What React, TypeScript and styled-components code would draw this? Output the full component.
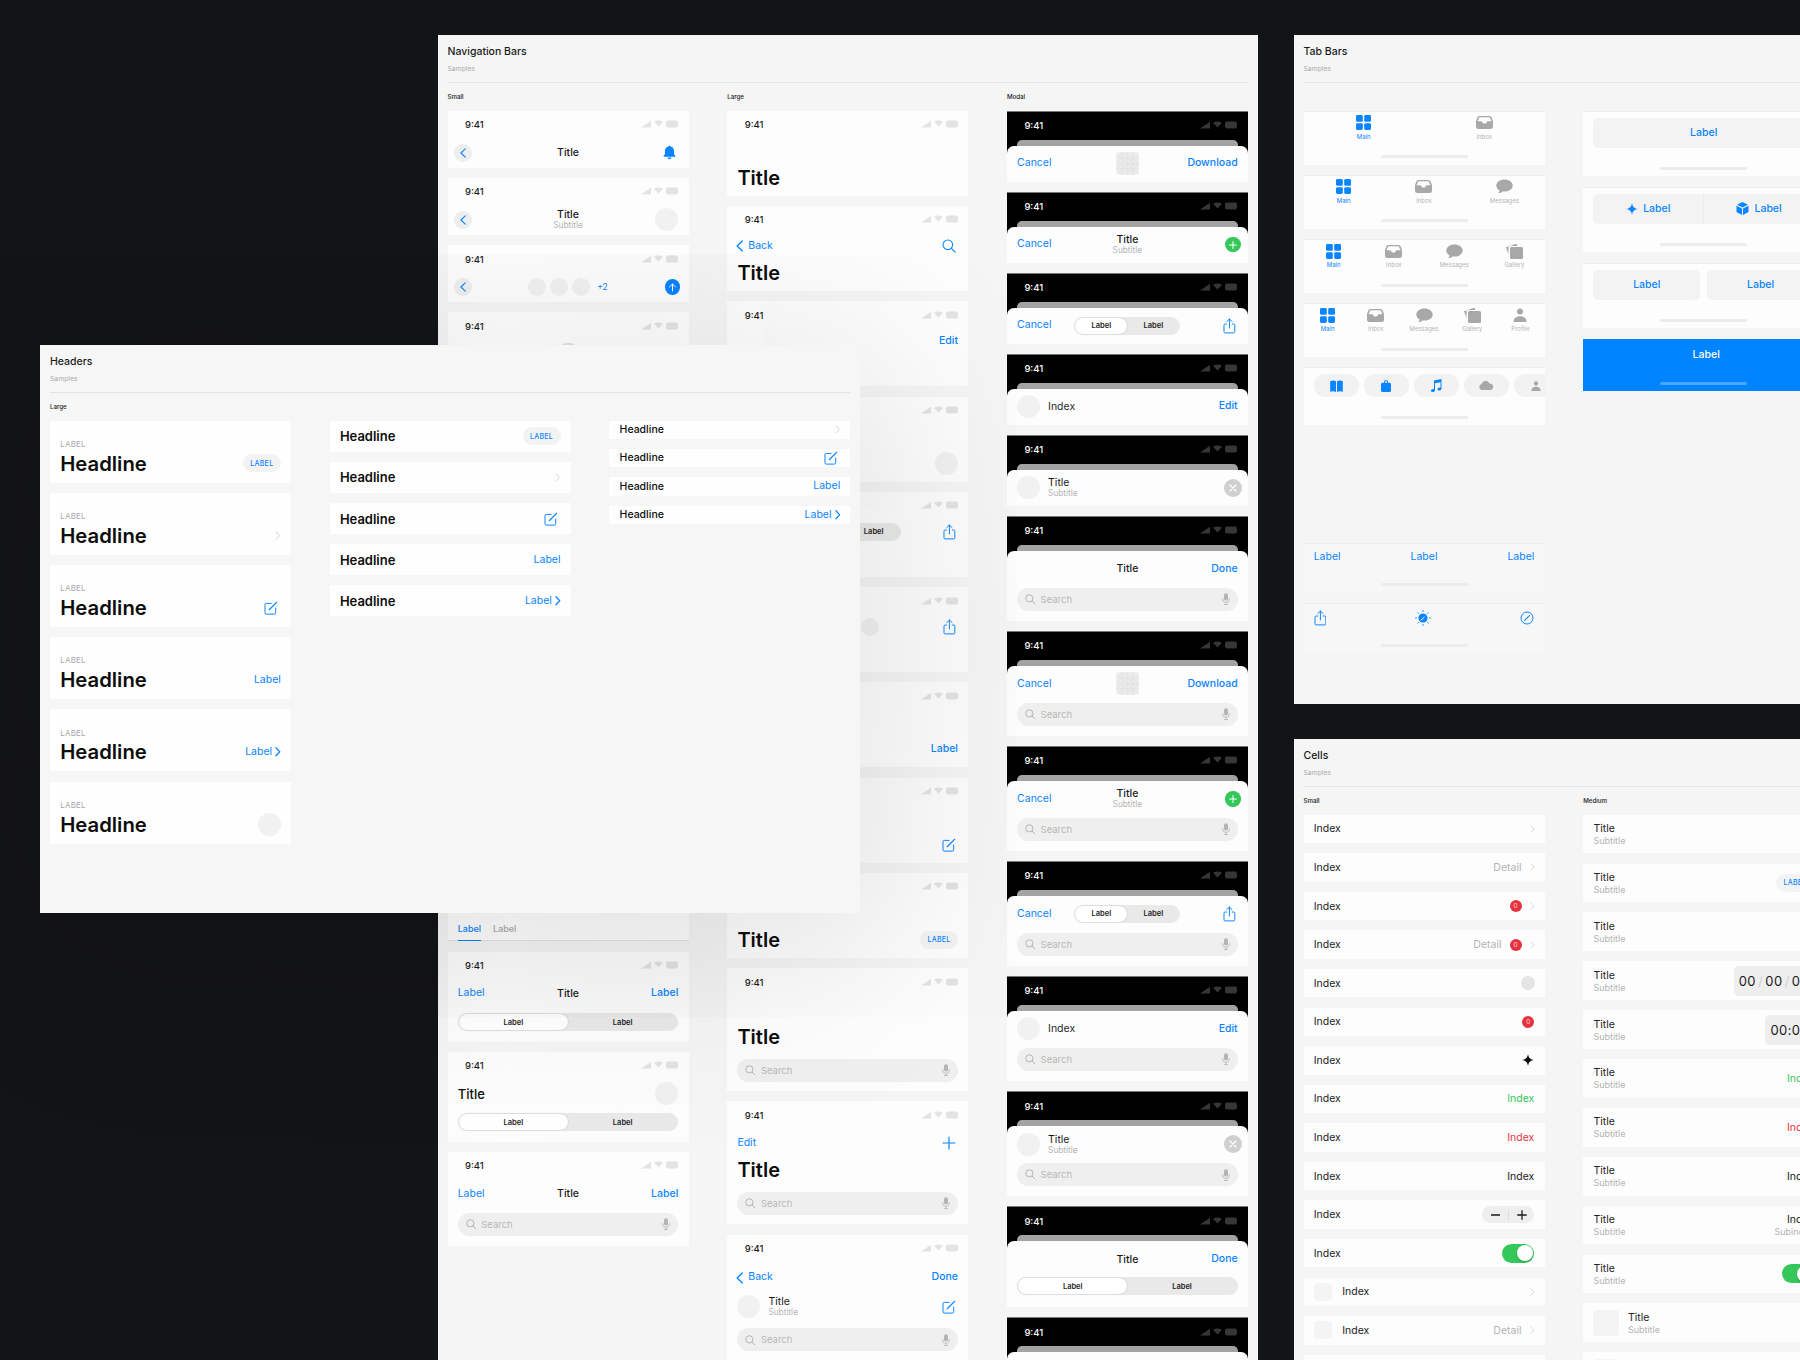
import React from 'react';
import styled, { createGlobalStyle } from 'styled-components';

const BLUE = '#0a84ff';
const GREEN = '#34c759';
const RED = '#e5343f';

const GlobalStyle = createGlobalStyle`
  html, body {
    margin: 0;
    background: #131416;
    font-family: Inter, "Liberation Sans", sans-serif;
    -webkit-font-smoothing: antialiased;
  }
`;

const Canvas = styled.div`
  position: relative;
  width: 1800px;
  height: 1360px;
  overflow: hidden;
  background: #131416;
`;

const Panel = styled.section<{ $left: number; $top: number; $height: number; $raised?: boolean }>`
  position: absolute;
  left: ${(p) => p.$left}px;
  top: ${(p) => p.$top}px;
  width: 820px;
  height: ${(p) => p.$height}px;
  padding: 10px 10px 10px ${(p) => (p.$raised ? 10 : 9.5)}px;
  box-sizing: border-box;
  background: ${(p) => (p.$raised ? '#f6f6f6' : '#f5f5f5')};
  z-index: ${(p) => (p.$raised ? 2 : 1)};
  box-shadow: ${(p) => (p.$raised ? '0 30px 220px rgba(0, 0, 0, 0.16)' : 'none')};
`;

const PanelHead = styled.header`
  height: 37px;
  border-bottom: 1px solid #e4e4e4;
`;

const PanelTitle = styled.h2`
  margin: 0;
  font-size: 10.5px;
  line-height: 14px;
  font-weight: 500;
  color: #1a1a1a;
`;

const PanelNote = styled.div`
  margin-top: 5.5px;
  font-size: 6.8px;
  line-height: 7px;
  color: #aaaaaa;
`;

const Columns = styled.div`
  display: grid;
  grid-template-columns: repeat(3, 241px);
  column-gap: 38.7px;
`;

const Column = styled.div<{ $gap?: number }>`
  display: flex;
  flex-direction: column;
  gap: ${(p) => p.$gap ?? 10.2}px;
`;

const ColumnLabel = styled.div`
  height: 8px;
  margin: 9.5px 0 0;
  font-size: 6.2px;
  line-height: 8px;
  font-weight: 500;
  color: #222222;
`;

const Card = styled.div<{ $h: number }>`
  flex: none;
  height: ${(p) => p.$h}px;
  background: #fdfdfd;
  overflow: hidden;
`;

/* status bar */
const StatusRow = styled.div<{ $dark?: boolean }>`
  display: flex;
  align-items: center;
  justify-content: space-between;
  height: 29px;
  padding: 0 10.5px 1px 17.5px;
  box-sizing: border-box;
  color: ${(p) => (p.$dark ? '#ffffff' : '#1c1c1c')};
`;

const Clock = styled.span`
  font-size: 9.5px;
  font-weight: 500;
`;

const StatusGlyphs = styled.svg`
  display: block;
  margin-top: -1px;
`;

const Status = ({ dark }: { dark?: boolean }) => {
  const tone = dark ? '#363636' : '#e3e3e3';
  return (
    <StatusRow $dark={dark}>
      <Clock>9:41</Clock>
      <StatusGlyphs width="37" height="8" viewBox="0 0 37 8">
        <path d="M0 7.5 L10 .8 V7.5 Z" fill={tone} />
        <path d="M13 1.8 Q17.5 -.8 22 1.8 L17.5 6.5 Z" fill={tone} />
        <rect x="25" y=".6" width="12" height="6.8" rx="1.8" fill={tone} />
      </StatusGlyphs>
    </StatusRow>
  );
};

/* icons */
type IconProps = { size?: number; color?: string };

const Chevron = ({ size = 8, color = '#d2d2d2', weight = 1 }: IconProps & { weight?: number }) => (
  <svg width={size * 0.6} height={size} viewBox="0 0 6 10" fill="none">
    <path d="M1 .8 5 5 1 9.2" stroke={color} strokeWidth={weight} strokeLinecap="round" strokeLinejoin="round" />
  </svg>
);

const BackChevron = ({ size = 12, color = BLUE }: IconProps) => (
  <svg width={size * 0.62} height={size} viewBox="0 0 8 13" fill="none">
    <path d="M6.8 1 1.2 6.5 6.8 12" stroke={color} strokeWidth="1.4" strokeLinecap="round" strokeLinejoin="round" />
  </svg>
);

const SearchGlyph = ({ size = 14, color = BLUE }: IconProps) => (
  <svg width={size} height={size} viewBox="0 0 14 14" fill="none">
    <circle cx="5.8" cy="5.8" r="4.8" stroke={color} strokeWidth="1.1" />
    <path d="M9.4 9.4 13.2 13.2" stroke={color} strokeWidth="1.2" strokeLinecap="round" />
  </svg>
);

const Compose = ({ size = 14, color = BLUE }: IconProps) => (
  <svg width={size} height={size} viewBox="0 0 14 14" fill="none">
    <path d="M7.5 2.4H2.3A1.3 1.3 0 0 0 1 3.7v8.1a1.3 1.3 0 0 0 1.3 1.3h8.1a1.3 1.3 0 0 0 1.3-1.3V6.6" stroke={color} strokeWidth="1" />
    <path d="M5 9 13 .8" stroke={color} strokeWidth="1.2" />
  </svg>
);

const Share = ({ size = 16, color = BLUE }: IconProps) => (
  <svg width={size * 0.8} height={size} viewBox="0 0 13 16" fill="none">
    <path d="M4 6H2.2A1.2 1.2 0 0 0 1 7.2v6.6A1.2 1.2 0 0 0 2.2 15h8.6a1.2 1.2 0 0 0 1.2-1.2V7.2A1.2 1.2 0 0 0 10.8 6H9" stroke={color} strokeWidth="1" />
    <path d="M6.5 10V1M3.8 3.5 6.5.9l2.7 2.6" stroke={color} strokeWidth="1" strokeLinecap="round" strokeLinejoin="round" />
  </svg>
);

const Mic = ({ color = '#b4b4b4' }: IconProps) => (
  <svg width="8" height="12" viewBox="0 0 8 12" fill="none">
    <rect x="2" y=".2" width="4" height="7.4" rx="2" fill={color} />
    <path d="M.6 5.2v.8a3.4 3.4 0 0 0 6.8 0v-.8M4 9.4v2M2 11.5h4" stroke={color} strokeWidth=".8" />
  </svg>
);

const Bell = ({ color = BLUE }: IconProps) => (
  <svg width="15" height="15" viewBox="0 0 14 14" fill={color}>
    <path d="M7 .6c.6 0 1 .4 1 .9 2 .4 3.2 2 3.2 4.2v2.7l1.3 1.8c.2.3 0 .7-.4.7H1.9c-.4 0-.6-.4-.4-.7l1.3-1.8V5.7C2.8 3.500 4 1.900 6 1.500c0-.5.4-.9 1-.9zM5.200 11.600h3.600c0 .9-.8 1.600-1.800 1.600s-1.800-.7-1.800-1.600z" />
  </svg>
);

const Plus = ({ size = 14, color = BLUE, weight = 1.2 }: IconProps & { weight?: number }) => (
  <svg width={size} height={size} viewBox="0 0 14 14" fill="none">
    <path d="M7 1V13M1 7H13" stroke={color} strokeWidth={weight} strokeLinecap="round" />
  </svg>
);

const Sparkle = ({ size = 12, color = BLUE }: IconProps) => (
  <svg width={size} height={size} viewBox="0 0 14 14" fill={color}>
    <path d="M7 0C7.4 4.2 9.8 6.6 14 7 9.8 7.4 7.4 9.8 7 14 6.6 9.8 4.2 7.4 0 7 4.2 6.6 6.6 4.2 7 0Z" />
  </svg>
);

const Cube = ({ color = BLUE }: IconProps) => (
  <svg width="13" height="13" viewBox="0 0 13 13" fill={color}>
    <path d="M6.5 0 12 2.8 6.5 5.6 1 2.8ZM.5 3.8 6 6.6V13L.5 10ZM12.5 3.8V10L7 13V6.6Z" />
  </svg>
);

const GridIcon = ({ color = BLUE }: IconProps) => (
  <svg width="15" height="15" viewBox="0 0 15 15" fill={color}>
    <rect width="6.8" height="6.8" rx="1.4" />
    <rect x="8.2" width="6.8" height="6.8" rx="1.4" />
    <rect y="8.2" width="6.8" height="6.8" rx="1.4" />
    <rect x="8.2" y="8.2" width="6.8" height="6.8" rx="1.4" />
  </svg>
);

const Inbox = ({ color = '#a8a8a8' }: IconProps) => (
  <svg width="17" height="13" viewBox="0 0 17 13" fill={color}>
    <path
      fillRule="evenodd"
      d="M3.4 0h10.2c.8 0 1.4.4 1.8 1.1L17 5v5.5A2.500 2.500 0 0 1 14.500 13h-12A2.500 2.500 0 0 1 0 10.500V5l1.600-3.900C2 .4 2.600 0 3.400 0ZM3.300 1.300 1.500 5.200h4.300c.3 1.400 1.300 2.300 2.700 2.300s2.400-.9 2.700-2.300h4.300l-1.800-3.900Z"
    />
  </svg>
);

const Bubble = ({ color = '#a8a8a8' }: IconProps) => (
  <svg width="17" height="15" viewBox="0 0 17 15" fill={color}>
    <path d="M8.5.4C3.9.4.3 3 .3 6.5c0 2.1 1.3 3.9 3.3 5-.2 1-.8 1.9-1.5 2.6 1.7 0 3.3-.7 4.5-1.7.6.1 1.2.2 1.9.2 4.6 0 8.2-2.7 8.2-6.100S13.100.4 8.500.4Z" />
  </svg>
);

const Gallery = ({ color = '#a8a8a8' }: IconProps) => (
  <svg width="17" height="15" viewBox="0 0 17 15" fill={color}>
    <rect x="4" y="3" width="13" height="12" rx="1.5" />
    <path d="M.1 3.3 9.5.1c.7-.2 1.300.1 1.500.7l.3 1.100H4.500C3.200 1.900 2.500 2.700 2.500 4v6.500L.8 5.200C.3 4.300-.3 3.700.1 3.300Z" />
  </svg>
);

const Person = ({ color = '#a8a8a8', size = 14 }: IconProps) => (
  <svg width={size} height={size} viewBox="0 0 14 14" fill={color}>
    <circle cx="7" cy="3.5" r="3" />
    <path d="M.5 13.5C.5 10.5 3 8.2 7 8.2s6.5 2.3 6.5 5.3c0 .3-.2.5-.5.5H1c-.3 0-.5-.2-.5-.5Z" />
  </svg>
);

const Book = ({ color = BLUE }: IconProps) => (
  <svg width="13" height="12" viewBox="0 0 13 12" fill={color}>
    <path d="M.2 1.2C2.2.3 4.5.3 6 1.3V12C4.5 11 2.2 10.9.2 11.7ZM12.8 1.2C10.8.3 8.5.3 7 1.3V12c1.500-1 3.800-1.100 5.800-.3Z" />
  </svg>
);

const Bag = ({ color = BLUE }: IconProps) => (
  <svg width="10" height="12" viewBox="0 0 10 12" fill={color}>
    <path d="M3 2.8V2a2 2 0 0 1 4 0v.8h1.500c.8 0 1.500.7 1.500 1.500v6.200c0 .8-.7 1.500-1.500 1.500h-7C.7 12 0 11.300 0 10.500V4.300c0-.8.7-1.500 1.500-1.500Zm1 0h2V2a1 1 0 0 0-2 0Z" />
  </svg>
);

const Note = ({ color = BLUE }: IconProps) => (
  <svg width="11" height="13" viewBox="0 0 11 13" fill={color}>
    <path d="M10.5 0v9.5c0 1.3-1 2-2.2 2-1 0-1.800-.5-1.800-1.300 0-1 1-1.600 2.200-1.700l.8-.1V3.200L4 4.200v7c0 1.200-1 1.800-2.200 1.800-1 0-1.800-.5-1.800-1.300 0-1 1-1.600 2.200-1.700l.8-.1V1.500Z" />
  </svg>
);

const Cloud = ({ color = '#a8a8a8' }: IconProps) => (
  <svg width="14" height="9" viewBox="0 0 14 9" fill={color}>
    <path d="M3 9A3 3 0 0 1 2.6 3.1 4.2 4.2 0 0 1 10.500 2.400 3.300 3.300 0 0 1 11 9Z" />
  </svg>
);

const Dial = ({ color = BLUE }: IconProps) => (
  <svg width="16" height="16" viewBox="0 0 16 16" fill="none">
    <circle cx="8" cy="8" r="4.6" fill={color} />
    <path d="M5.6 10.5 9.5 7" stroke="#fdfdfd" strokeWidth="1" />
    <path
      d="M8 .6v.9M8 14.5v.9M.6 8h.9M14.5 8h.9M2.8 2.8l.6.6M12.600 12.600l.6.6M2.800 13.200l.6-.6M12.600 3.400l.6-.6"
      stroke={color}
      strokeWidth="1"
      strokeLinecap="round"
    />
  </svg>
);

const Compass = ({ color = BLUE }: IconProps) => (
  <svg width="14" height="14" viewBox="0 0 14 14" fill="none">
    <circle cx="7" cy="7" r="6" stroke={color} strokeWidth="1" />
    <path d="M4.6 9.4 9.4 4.6" stroke={color} strokeWidth="1.1" strokeLinecap="round" />
  </svg>
);

const AppGlyph = () => (
  <svg width="23" height="23" viewBox="0 0 23 23" fill="none">
    <rect width="23" height="23" rx="5" fill="#ececec" />
    <g stroke="#dcdcdc" strokeWidth=".5">
      <path d="M0 11.5H23M11.5 0V23M6 0V23M17 0V23M0 6H23M0 17H23M0 0 23 23M23 0 0 23" />
      <circle cx="11.5" cy="11.5" r="5.5" />
      <circle cx="11.5" cy="11.5" r="9" />
    </g>
  </svg>
);

/* shared bits */
const BarRow = styled.div<{ $h?: number }>`
  display: grid;
  grid-template-columns: 1fr auto 1fr;
  align-items: center;
  height: ${(p) => p.$h ?? 26}px;
  padding: 0 10.2px;
`;

const Slot = styled.div<{ $end?: boolean; $gap?: number; $inset?: number }>`
  display: flex;
  align-items: center;
  justify-content: ${(p) => (p.$end ? 'flex-end' : 'flex-start')};
  gap: ${(p) => p.$gap ?? 0}px;
  padding-right: ${(p) => p.$inset ?? 0}px;
  min-width: 0;
`;

const Link = styled.span<{ $strong?: boolean; $size?: number }>`
  font-size: ${(p) => p.$size ?? 10.5}px;
  line-height: 1;
  font-weight: ${(p) => (p.$strong ? 500 : 400)};
  color: ${BLUE};
  white-space: nowrap;
`;

const BarTitle = styled.span`
  display: block;
  font-size: 10.5px;
  line-height: 11px;
  font-weight: 500;
  color: #1a1a1a;
  text-align: center;
`;

const BarSubtitle = styled.span`
  display: block;
  margin-top: 1px;
  font-size: 8.3px;
  line-height: 9px;
  color: #b4b4b4;
  text-align: center;
`;

const Stacked = styled.div`
  display: flex;
  flex-direction: column;
`;

const LeftTitle = styled(BarTitle)`
  font-weight: 400;
  text-align: left;
`;

const LeftSubtitle = styled(BarSubtitle)`
  text-align: left;
`;

const LargeTitle = styled.div<{ $flush?: boolean }>`
  height: 28px;
  margin-top: ${(p) => (p.$flush ? 0 : 2)}px;
  padding-left: 10.2px;
  font-size: 20px;
  line-height: 28px;
  font-weight: 600;
  color: #0d0d0d;
`;

const LargeTitleRow = styled(BarRow)`
  height: 28px;
  margin-top: 2px;
`;

const TitleInline = styled.span`
  font-size: 20px;
  line-height: 28px;
  font-weight: 600;
  color: #0d0d0d;
`;

const Avatar = styled.span<{ $d?: number }>`
  display: block;
  flex: none;
  width: ${(p) => p.$d ?? 23}px;
  height: ${(p) => p.$d ?? 23}px;
  border-radius: 50%;
  background: #f1f1f1;
`;

const BackCircle = styled.span`
  display: flex;
  align-items: center;
  justify-content: center;
  width: 18px;
  height: 18px;
  margin-left: -4px;
  border-radius: 50%;
  background: #eeeeee;
`;

const RoundButton = styled.span<{ $bg: string; $d: number; $out?: number }>`
  display: flex;
  align-items: center;
  justify-content: center;
  flex: none;
  width: ${(p) => p.$d}px;
  height: ${(p) => p.$d}px;
  margin-right: ${(p) => -(p.$out ?? 0)}px;
  border-radius: 50%;
  background: ${(p) => p.$bg};
`;

const PlusBadge = styled.span`
  margin-left: 3px;
  font-size: 8.5px;
  color: ${BLUE};
`;

const SegTrack = styled.div<{ $w?: number }>`
  display: flex;
  width: ${(p) => (p.$w ? `${p.$w}px` : 'auto')};
  height: 18px;
  padding: 1px;
  box-sizing: border-box;
  border-radius: 9px;
  background: #e9e9e9;
`;

const SegItem = styled.span<{ $on?: boolean }>`
  flex: 1;
  display: flex;
  align-items: center;
  justify-content: center;
  border-radius: 8px;
  font-size: 7.5px;
  font-weight: 600;
  color: #1f1f1f;
  background: ${(p) => (p.$on ? '#ffffff' : 'transparent')};
  box-shadow: ${(p) => (p.$on ? '0 0 2px rgba(0, 0, 0, 0.18)' : 'none')};
`;

const Segment = ({ w }: { w?: number }) => (
  <SegTrack $w={w}>
    <SegItem $on>Label</SegItem>
    <SegItem>Label</SegItem>
  </SegTrack>
);

const FullSegment = styled.div<{ $top?: number }>`
  margin: ${(p) => p.$top ?? 0}px 10.2px 0;
`;

const SearchBox = styled.div<{ $top?: number }>`
  display: flex;
  align-items: center;
  height: 23px;
  margin: ${(p) => p.$top ?? 0}px 10.2px 0;
  padding: 0 8px;
  gap: 5px;
  border-radius: 12px;
  background: #efefef;
  font-size: 9.5px;
  color: #b8b8b8;
`;

const SearchWord = styled.span`
  flex: 1;
`;

const Search = ({ top }: { top?: number }) => (
  <SearchBox $top={top}>
    <SearchGlyph size={10.5} color="#a9a9a9" />
    <SearchWord>Search</SearchWord>
    <Mic />
  </SearchBox>
);

const Pill = styled.span`
  display: block;
  align-self: start;
  width: 21px;
  height: 18px;
  margin-top: 2px;
  border-radius: 9px;
  background: #e2e2e2;
`;

const Tag = styled.span`
  display: inline-flex;
  align-items: center;
  justify-content: center;
  flex: none;
  width: 38px;
  height: 18px;
  border-radius: 9px;
  background: #f3f3f3;
  font-size: 7px;
  font-weight: 500;
  letter-spacing: 0.3px;
  color: ${BLUE};
`;

const TabUnderline = styled.div`
  display: flex;
  gap: 12px;
  height: 26px;
  padding: 0 10.2px;
  box-sizing: border-box;
  border-bottom: 1px solid #e3e3e3;
`;

const TabWord = styled.span<{ $on?: boolean }>`
  height: 26px;
  padding-top: 7.5px;
  box-sizing: border-box;
  font-size: 9px;
  line-height: 11px;
  font-weight: 500;
  color: ${(p) => (p.$on ? BLUE : '#a9a9a9')};
  border-bottom: ${(p) => (p.$on ? `1.5px solid ${BLUE}` : '0')};
`;

const BackWrap = styled(Slot)`
  margin-left: -1.5px;
`;

const BackLink = () => (
  <BackWrap $gap={5}>
    <BackChevron />
    <Link>Back</Link>
  </BackWrap>
);

const SideTitle = styled.span`
  font-size: 13px;
  font-weight: 500;
  color: #0d0d0d;
`;

/* navigation bars */
const SmallColumn = () => (
  <Column>
    <ColumnLabel>Small</ColumnLabel>
    <Card $h={57}>
      <Status />
      <BarRow>
        <Slot>
          <BackCircle>
            <BackChevron size={10} />
          </BackCircle>
        </Slot>
        <BarTitle>Title</BarTitle>
        <Slot $end>
          <RoundButton $bg="transparent" $d={15} $out={-1}>
            <Bell />
          </RoundButton>
        </Slot>
      </BarRow>
    </Card>
    <Card $h={57}>
      <Status />
      <BarRow>
        <Slot>
          <BackCircle>
            <BackChevron size={10} />
          </BackCircle>
        </Slot>
        <Stacked>
          <BarTitle>Title</BarTitle>
          <BarSubtitle>Subtitle</BarSubtitle>
        </Stacked>
        <Slot $end>
          <Avatar />
        </Slot>
      </BarRow>
    </Card>
    <Card $h={57}>
      <Status />
      <BarRow>
        <Slot>
          <BackCircle>
            <BackChevron size={10} />
          </BackCircle>
        </Slot>
        <Slot $gap={4}>
          <Avatar $d={18} />
          <Avatar $d={18} />
          <Avatar $d={18} />
          <PlusBadge>+2</PlusBadge>
        </Slot>
        <Slot $end>
          <RoundButton $bg={BLUE} $d={15.5} $out={2}>
            <svg width="9" height="9" viewBox="0 0 9 9" fill="none">
              <path d="M4.5 8V1M1.5 4 4.5 1l3 3" stroke="#fff" strokeWidth="1" strokeLinecap="round" strokeLinejoin="round" />
            </svg>
          </RoundButton>
        </Slot>
      </BarRow>
    </Card>
    <Card $h={57}>
      <Status />
      <BarRow>
        <Slot />
        <Pill />
        <Slot />
      </BarRow>
    </Card>
    {Array.from({ length: 7 }, (_, i) => (
      <Card key={i} $h={57}>
        <Status />
        <BarRow>
          <Slot />
          <BarTitle>Title</BarTitle>
          <Slot />
        </BarRow>
      </Card>
    ))}
    <Card $h={91.6}>
      <Status />
      <BarRow $h={36.6}>
        <Slot />
        <BarTitle>Title</BarTitle>
        <Slot />
      </BarRow>
      <TabUnderline>
        <TabWord $on>Label</TabWord>
        <TabWord>Label</TabWord>
      </TabUnderline>
    </Card>
    <Card $h={90}>
      <Status />
      <BarRow>
        <Link>Label</Link>
        <BarTitle>Title</BarTitle>
        <Slot $end>
          <Link $strong>Label</Link>
        </Slot>
      </BarRow>
      <FullSegment $top={6.5}>
        <Segment />
      </FullSegment>
    </Card>
    <Card $h={90}>
      <Status />
      <BarRow>
        <SideTitle>Title</SideTitle>
        <span />
        <Slot $end>
          <Avatar />
        </Slot>
      </BarRow>
      <FullSegment $top={6.5}>
        <Segment />
      </FullSegment>
    </Card>
    <Card $h={94}>
      <Status />
      <BarRow>
        <Link>Label</Link>
        <BarTitle>Title</BarTitle>
        <Slot $end>
          <Link $strong>Label</Link>
        </Slot>
      </BarRow>
      <Search top={6} />
    </Card>
  </Column>
);

const LargeRow = styled(BarRow)`
  height: 22px;
`;

const EmptyRow = () => <LargeRow />;

const LargeColumn = () => (
  <Column>
    <ColumnLabel>Large</ColumnLabel>
    <Card $h={85.1}>
      <Status />
      <EmptyRow />
      <LargeTitle>Title</LargeTitle>
    </Card>
    <Card $h={85.1}>
      <Status />
      <LargeRow>
        <BackLink />
        <span />
        <Slot $end $inset={2}>
          <SearchGlyph />
        </Slot>
      </LargeRow>
      <LargeTitle>Title</LargeTitle>
    </Card>
    <Card $h={85.1}>
      <Status />
      <LargeRow>
        <span />
        <span />
        <Slot $end>
          <Link $strong>Edit</Link>
        </Slot>
      </LargeRow>
      <LargeTitle>Title</LargeTitle>
    </Card>
    <Card $h={85.1}>
      <Status />
      <EmptyRow />
      <LargeTitleRow>
        <TitleInline>Title</TitleInline>
        <span />
        <Slot $end>
          <Avatar />
        </Slot>
      </LargeTitleRow>
    </Card>
    <Card $h={85.1}>
      <Status />
      <LargeRow>
        <span />
        <Segment w={106} />
        <Slot $end $inset={2}>
          <Share />
        </Slot>
      </LargeRow>
      <LargeTitle>Title</LargeTitle>
    </Card>
    <Card $h={85.1}>
      <Status />
      <LargeRow>
        <span />
        <Slot $gap={4}>
          <Avatar $d={18} />
          <Avatar $d={18} />
          <Avatar $d={18} />
        </Slot>
        <Slot $end $inset={2}>
          <Share />
        </Slot>
      </LargeRow>
      <LargeTitle>Title</LargeTitle>
    </Card>
    <Card $h={85.1}>
      <Status />
      <EmptyRow />
      <LargeTitleRow>
        <TitleInline>Title</TitleInline>
        <span />
        <Slot $end>
          <Link $strong>Label</Link>
        </Slot>
      </LargeTitleRow>
    </Card>
    <Card $h={85.1}>
      <Status />
      <EmptyRow />
      <LargeTitleRow>
        <TitleInline>Title</TitleInline>
        <span />
        <Slot $end $inset={2}>
          <Compose />
        </Slot>
      </LargeTitleRow>
    </Card>
    <Card $h={85.1}>
      <Status />
      <EmptyRow />
      <LargeTitleRow>
        <TitleInline>Title</TitleInline>
        <span />
        <Slot $end>
          <Tag>LABEL</Tag>
        </Slot>
      </LargeTitleRow>
    </Card>
    <Card $h={123}>
      <Status />
      <BarRow />
      <LargeTitle $flush>Title</LargeTitle>
      <Search top={7.4} />
    </Card>
    <Card $h={123}>
      <Status />
      <BarRow>
        <Link>Edit</Link>
        <span />
        <Slot $end $inset={2}>
          <Plus />
        </Slot>
      </BarRow>
      <LargeTitle $flush>Title</LargeTitle>
      <Search top={7.4} />
    </Card>
    <Card $h={127}>
      <Status />
      <BarRow $h={28}>
        <BackLink />
        <span />
        <Slot $end>
          <Link $strong>Done</Link>
        </Slot>
      </BarRow>
      <BarRow $h={30}>
        <Slot $gap={8}>
          <Avatar />
          <Stacked>
            <LeftTitle>Title</LeftTitle>
            <LeftSubtitle>Subtitle</LeftSubtitle>
          </Stacked>
        </Slot>
        <span />
        <Slot $end $inset={2}>
          <Compose />
        </Slot>
      </BarRow>
      <Search top={6.7} />
    </Card>
  </Column>
);

/* modal column */
const ModalCard = styled.div<{ $h: number }>`
  display: flex;
  flex-direction: column;
  flex: none;
  height: ${(p) => p.$h}px;
  background: #000000;
  border-top: 1px solid #777777;
  box-sizing: border-box;
  overflow: hidden;
`;

const BehindSheet = styled.div`
  flex: none;
  height: 10px;
  margin: -1px 10.2px -4px;
  border-radius: 5px 5px 0 0;
  background: #a3a3a3;
`;

const Sheet = styled.div`
  position: relative;
  flex: 1;
  border-radius: 7px 7px 0 0;
  background: #fdfdfd;
`;

const ModalRow = styled(BarRow)`
  height: 36px;
`;

const ModalIndex = styled.span`
  font-size: 10.5px;
  color: #2a2a2a;
`;

const rows: Record<string, React.ReactNode> = {
  download: (
    <ModalRow>
      <Link>Cancel</Link>
      <AppGlyph />
      <Slot $end>
        <Link $strong>Download</Link>
      </Slot>
    </ModalRow>
  ),
  title: (
    <ModalRow>
      <Link>Cancel</Link>
      <Stacked>
        <BarTitle>Title</BarTitle>
        <BarSubtitle>Subtitle</BarSubtitle>
      </Stacked>
      <Slot $end>
        <RoundButton $bg={GREEN} $d={15.5} $out={3}>
          <Plus size={8} color="#fff" weight={1.8} />
        </RoundButton>
      </Slot>
    </ModalRow>
  ),
  seg: (
    <ModalRow>
      <Link>Cancel</Link>
      <Segment w={106} />
      <Slot $end $inset={2}>
        <Share />
      </Slot>
    </ModalRow>
  ),
  index: (
    <ModalRow>
      <Slot $gap={8}>
        <Avatar />
        <ModalIndex>Index</ModalIndex>
      </Slot>
      <span />
      <Slot $end>
        <Link $strong>Edit</Link>
      </Slot>
    </ModalRow>
  ),
  close: (
    <ModalRow>
      <Slot $gap={8}>
        <Avatar />
        <Stacked>
          <LeftTitle>Title</LeftTitle>
          <LeftSubtitle>Subtitle</LeftSubtitle>
        </Stacked>
      </Slot>
      <span />
      <Slot $end>
        <RoundButton $bg="#cfcfcf" $d={18} $out={4}>
          <svg width="8" height="8" viewBox="0 0 8 8" fill="none">
            <path d="M1 1 7 7M7 1 1 7" stroke="#fff" strokeWidth="1.2" strokeLinecap="round" />
          </svg>
        </RoundButton>
      </Slot>
    </ModalRow>
  ),
  done: (
    <ModalRow>
      <span />
      <BarTitle>Title</BarTitle>
      <Slot $end>
        <Link $strong>Done</Link>
      </Slot>
    </ModalRow>
  ),
};

const Modal = ({ row, search, seg }: { row: string; search?: boolean; seg?: boolean }) => (
  <ModalCard $h={search ? 105 : seg ? 101 : 71}>
    <Status dark />
    <BehindSheet />
    <Sheet>
      {rows[row]}
      {search && <Search top={1} />}
      {seg && (
        <FullSegment>
          <Segment />
        </FullSegment>
      )}
    </Sheet>
  </ModalCard>
);

const ModalColumn = () => (
  <Column $gap={10.05}>
    <ColumnLabel>Modal</ColumnLabel>
    {['download', 'title', 'seg', 'index', 'close'].map((r) => (
      <Modal key={r} row={r} />
    ))}
    {['done', 'download', 'title', 'seg', 'index', 'close'].map((r) => (
      <Modal key={r} row={r} search />
    ))}
    <Modal row="done" seg />
    <Modal row="title" />
  </Column>
);

/* headers */
const HeaderCard = styled.div<{ $h: number }>`
  display: flex;
  flex: none;
  align-items: center;
  justify-content: space-between;
  height: ${(p) => p.$h}px;
  padding: 0 10.2px;
  box-sizing: border-box;
  background: #fefefe;
`;

const Eyebrow = styled.div`
  margin-bottom: 2.8px;
  font-size: 8px;
  line-height: 9px;
  letter-spacing: 0.2px;
  color: #a9a9a9;
`;

const HeadLine = styled.div<{ $size: number; $weight?: number }>`
  font-size: ${(p) => p.$size}px;
  line-height: ${(p) => p.$size + 3}px;
  font-weight: ${(p) => p.$weight ?? 600};
  color: #0d0d0d;
`;

const HeadStack = styled.div`
  padding-top: 11.5px;
`;

const HeadRight = styled.div`
  display: flex;
  align-items: center;
  gap: 3px;
  padding-top: 23.4px;
`;

const InlineRight = styled.div`
  display: flex;
  align-items: center;
  gap: 3px;
`;

const ComposeEnd = styled.span`
  display: flex;
  margin-right: 2.5px;
`;

const tails: React.ReactNode[] = [
  <Tag key="tag">LABEL</Tag>,
  <Chevron key="chev" size={9} />,
  <ComposeEnd key="compose">
    <Compose />
  </ComposeEnd>,
  <Link key="label">Label</Link>,
  <React.Fragment key="labelmore">
    <Link>Label</Link>
    <Chevron size={9.5} color={BLUE} weight={1.3} />
  </React.Fragment>,
  <Avatar key="avatar" />,
];

const BigHeaders = () => (
  <Column>
    <ColumnLabel>Large</ColumnLabel>
    {tails.map((tail, i) => (
      <HeaderCard key={i} $h={62}>
        <HeadStack>
          <Eyebrow>LABEL</Eyebrow>
          <HeadLine $size={20.3}>Headline</HeadLine>
        </HeadStack>
        <HeadRight>{tail}</HeadRight>
      </HeaderCard>
    ))}
  </Column>
);

const MidHeaders = () => (
  <Column>
    <ColumnLabel />
    {tails.slice(0, 5).map((tail, i) => (
      <HeaderCard key={i} $h={31}>
        <HeadLine $size={13}>Headline</HeadLine>
        <InlineRight>{tail}</InlineRight>
      </HeaderCard>
    ))}
  </Column>
);

const SmallHeaders = () => (
  <Column>
    <ColumnLabel />
    {tails.slice(1, 5).map((tail, i) => (
      <HeaderCard key={i} $h={18.2}>
        <HeadLine $size={10.5} $weight={500}>
          Headline
        </HeadLine>
        <InlineRight>{tail}</InlineRight>
      </HeaderCard>
    ))}
  </Column>
);

/* tab bars */
const BarCard = styled.div<{ $h: number; $tone?: string }>`
  display: flex;
  flex: none;
  flex-direction: column;
  height: ${(p) => p.$h}px;
  box-sizing: border-box;
  border-top: 1px solid #ededed;
  background: ${(p) => p.$tone ?? '#fdfdfd'};
  overflow: hidden;
`;

const HomeBar = styled.div`
  flex: none;
  width: 87px;
  height: 3px;
  margin: auto auto 6.5px;
  border-radius: 2px;
  background: #ececec;
`;

const TabRow = styled.div`
  display: flex;
`;

const TabItem = styled.div<{ $on?: boolean }>`
  flex: 1;
  display: flex;
  flex-direction: column;
  align-items: center;
  padding-top: 3px;
  font-size: 6px;
  line-height: 8px;
  color: ${(p) => (p.$on ? BLUE : '#b4b4b4')};
`;

const TabIcon = styled.div`
  display: flex;
  align-items: center;
  justify-content: center;
  height: 16px;
  margin-bottom: 2px;
`;

const tabSet = [
  { label: 'Main', icon: <GridIcon />, on: true },
  { label: 'Inbox', icon: <Inbox /> },
  { label: 'Messages', icon: <Bubble /> },
  { label: 'Gallery', icon: <Gallery /> },
  { label: 'Profile', icon: <Person /> },
];

const PillRow = styled.div`
  display: flex;
  gap: 5px;
  padding: 6px 0 0 10.2px;
`;

const TabPill = styled.span`
  display: flex;
  flex: none;
  align-items: center;
  justify-content: center;
  width: 45px;
  height: 23px;
  border-radius: 12px;
  background: #f2f2f2;
`;

const EdgeRow = styled.div`
  display: flex;
  justify-content: space-between;
  align-items: center;
  height: 28px;
  padding: 0 10.2px;
`;

const BottomGroup = styled.div`
  display: flex;
  flex-direction: column;
  gap: 10.5px;
  margin-top: 107px;
`;

const TabsLeft = () => (
  <Column>
    <ColumnLabel />
    {[2, 3, 4, 5].map((n) => (
      <BarCard key={n} $h={54}>
        <TabRow>
          {tabSet.slice(0, n).map((t) => (
            <TabItem key={t.label} $on={t.on}>
              <TabIcon>{t.icon}</TabIcon>
              {t.label}
            </TabItem>
          ))}
        </TabRow>
        <HomeBar />
      </BarCard>
    ))}
    <BarCard $h={58}>
      <PillRow>
        <TabPill>
          <Book />
        </TabPill>
        <TabPill>
          <Bag />
        </TabPill>
        <TabPill>
          <Note />
        </TabPill>
        <TabPill>
          <Cloud />
        </TabPill>
        <TabPill>
          <Person size={10} />
        </TabPill>
      </PillRow>
      <HomeBar />
    </BarCard>
    <BottomGroup>
      <BarCard $h={50} $tone="#f7f7f7">
        <EdgeRow>
          <Link>Label</Link>
          <Link>Label</Link>
          <Link>Label</Link>
        </EdgeRow>
        <HomeBar />
      </BarCard>
      <BarCard $h={50} $tone="#f7f7f7">
        <EdgeRow>
          <Share />
          <Dial />
          <Compass />
        </EdgeRow>
        <HomeBar />
      </BarCard>
    </BottomGroup>
  </Column>
);

const ButtonRow = styled.div`
  display: flex;
  gap: 7px;
  height: 30.5px;
  margin: 6px 10.2px 0;
`;

const ActionButton = styled.div`
  flex: 1;
  display: flex;
  align-items: center;
  justify-content: center;
  gap: 5px;
  border-radius: 5px;
  background: #f3f3f3;
  font-size: 10.5px;
  font-weight: 500;
  color: ${BLUE};
`;

const JoinedRow = styled(ButtonRow)`
  gap: 0;
  border-radius: 5px;
  overflow: hidden;
  ${ActionButton} {
    border-radius: 0;
  }
  ${ActionButton}:first-child {
    border-right: 1px solid #ebebeb;
  }
`;

const BlueCard = styled.div`
  display: flex;
  flex: none;
  flex-direction: column;
  height: 52.7px;
  background: #0084ff;
`;

const BlueLabel = styled.div`
  padding: 9px 0 0 5px;
  font-size: 10.5px;
  line-height: 13px;
  font-weight: 500;
  color: #ffffff;
  text-align: center;
`;

const BlueHome = styled(HomeBar)`
  background: #4aa6ff;
`;

const TabsRight = () => (
  <Column>
    <ColumnLabel />
    <BarCard $h={65.8}>
      <ButtonRow>
        <ActionButton>Label</ActionButton>
      </ButtonRow>
      <HomeBar />
    </BarCard>
    <BarCard $h={65.8}>
      <JoinedRow>
        <ActionButton>
          <Sparkle />
          Label
        </ActionButton>
        <ActionButton>
          <Cube />
          Label
        </ActionButton>
      </JoinedRow>
      <HomeBar />
    </BarCard>
    <BarCard $h={65.8}>
      <ButtonRow>
        <ActionButton>Label</ActionButton>
        <ActionButton>Label</ActionButton>
      </ButtonRow>
      <HomeBar />
    </BarCard>
    <BlueCard>
      <BlueLabel>Label</BlueLabel>
      <BlueHome />
    </BlueCard>
  </Column>
);

/* cells */
const CellCard = styled.div<{ $h: number }>`
  display: flex;
  flex: none;
  align-items: center;
  justify-content: space-between;
  height: ${(p) => p.$h}px;
  padding: 0 10.2px;
  box-sizing: border-box;
  background: #fdfdfd;
`;

const CellLead = styled.div<{ $gap: number }>`
  display: flex;
  align-items: center;
  gap: ${(p) => p.$gap}px;
`;

const CellText = styled.span<{ $tone?: string }>`
  font-size: 10.5px;
  color: ${(p) => p.$tone ?? '#222222'};
`;

const CellTail = styled.div`
  display: flex;
  align-items: center;
  gap: 8px;
`;

const Detail = styled.span`
  font-size: 10.5px;
  color: #b4b4b4;
`;

const Count = styled.span`
  display: flex;
  align-items: center;
  justify-content: center;
  width: 12px;
  height: 12px;
  border-radius: 50%;
  background: ${RED};
  font-size: 6.5px;
  color: #fbdcdc;
`;

const GrayDot = styled.span`
  display: block;
  width: 14px;
  height: 14px;
  margin-right: -0.5px;
  border-radius: 50%;
  background: #e4e4e4;
`;

const Stepper = styled.div`
  display: flex;
  align-items: center;
  width: 52px;
  height: 17.5px;
  border-radius: 9px;
  background: #eeeeee;
`;

const StepHalf = styled.span<{ $first?: boolean }>`
  flex: 1;
  display: flex;
  align-items: center;
  justify-content: center;
  height: 10px;
  border-right: ${(p) => (p.$first ? '1px solid #dddddd' : '0')};
`;

const Toggle = styled.span`
  display: flex;
  align-items: center;
  justify-content: flex-end;
  flex: none;
  width: 32px;
  height: 19px;
  padding: 1.5px;
  box-sizing: border-box;
  border-radius: 10px;
  background: ${GREEN};
`;

const Knob = styled.span`
  display: block;
  width: 16px;
  height: 16px;
  border-radius: 50%;
  background: #ffffff;
  box-shadow: 0 1px 2px rgba(0, 0, 0, 0.2);
`;

const Thumb = styled.span<{ $d: number }>`
  display: block;
  flex: none;
  width: ${(p) => p.$d}px;
  height: ${(p) => p.$d}px;
  border-radius: 4px;
  background: #f4f4f4;
`;

const SmallCell = ({ thumb, tail }: { thumb?: boolean; tail?: React.ReactNode }) => (
  <CellCard $h={28.4}>
    <CellLead $gap={10.5}>
      {thumb && <Thumb $d={18} />}
      <CellText>Index</CellText>
    </CellLead>
    <CellTail>{tail}</CellTail>
  </CellCard>
);

const CellsLeft = () => (
  <Column>
    <ColumnLabel>Small</ColumnLabel>
    <SmallCell tail={<Chevron />} />
    <SmallCell
      tail={
        <>
          <Detail>Detail</Detail>
          <Chevron />
        </>
      }
    />
    <SmallCell
      tail={
        <>
          <Count>0</Count>
          <Chevron />
        </>
      }
    />
    <SmallCell
      tail={
        <>
          <Detail>Detail</Detail>
          <Count>0</Count>
          <Chevron />
        </>
      }
    />
    <SmallCell tail={<GrayDot />} />
    <SmallCell tail={<Count>0</Count>} />
    <SmallCell tail={<Sparkle size={12} color="#0d0d0d" />} />
    <SmallCell tail={<CellText $tone={GREEN}>Index</CellText>} />
    <SmallCell tail={<CellText $tone={RED}>Index</CellText>} />
    <SmallCell tail={<CellText>Index</CellText>} />
    <SmallCell
      tail={
        <Stepper>
          <StepHalf $first>
            <svg width="9" height="2" viewBox="0 0 9 2">
              <path d="M0 1H9" stroke="#1a1a1a" strokeWidth="1.5" />
            </svg>
          </StepHalf>
          <StepHalf>
            <Plus size={10} color="#1a1a1a" weight={1.8} />
          </StepHalf>
        </Stepper>
      }
    />
    <SmallCell
      tail={
        <Toggle>
          <Knob />
        </Toggle>
      }
    />
    <SmallCell thumb tail={<Chevron />} />
    <SmallCell
      thumb
      tail={
        <>
          <Detail>Detail</Detail>
          <Chevron />
        </>
      }
    />
    <SmallCell thumb tail={<Chevron />} />
  </Column>
);

const TimeBox = styled.span`
  display: block;
  height: 30px;
  padding: 0 5px;
  border-radius: 5px;
  background: #eeeeee;
  font-size: 13px;
  line-height: 30px;
  letter-spacing: 0.4px;
  color: #1a1a1a;
  white-space: nowrap;
`;

const Slash = styled.span`
  margin: 0 2.2px;
  color: #c8c8c8;
  font-weight: 300;
`;

const RightStack = styled.div`
  display: flex;
  flex-direction: column;
  align-items: flex-end;
`;

const SubText = styled.span`
  font-size: 9px;
  color: #b4b4b4;
`;

const MediumCell = ({ thumb, tail }: { thumb?: boolean; tail?: React.ReactNode }) => (
  <CellCard $h={38.7}>
    <CellLead $gap={8.5}>
      {thumb && <Thumb $d={26} />}
      <Stacked>
        <CellText>Title</CellText>
        <SubText>Subtitle</SubText>
      </Stacked>
    </CellLead>
    <CellTail>{tail}</CellTail>
  </CellCard>
);

const CellsRight = () => (
  <Column>
    <ColumnLabel>Medium</ColumnLabel>
    <MediumCell tail={<Chevron />} />
    <MediumCell tail={<Tag>LABEL</Tag>} />
    <MediumCell tail={<Chevron />} />
    <MediumCell
      tail={
        <TimeBox>
          00<Slash>/</Slash>00<Slash>/</Slash>00
        </TimeBox>
      }
    />
    <MediumCell tail={<TimeBox>00:00</TimeBox>} />
    <MediumCell tail={<CellText $tone={GREEN}>Index</CellText>} />
    <MediumCell tail={<CellText $tone={RED}>Index</CellText>} />
    <MediumCell tail={<CellText>Index</CellText>} />
    <MediumCell
      tail={
        <RightStack>
          <CellText>Index</CellText>
          <SubText>Subindex</SubText>
        </RightStack>
      }
    />
    <MediumCell
      tail={
        <Toggle>
          <Knob />
        </Toggle>
      }
    />
    <MediumCell thumb tail={<Chevron />} />
    <MediumCell thumb tail={<Chevron />} />
  </Column>
);

const Head = ({ title }: { title: string }) => (
  <PanelHead>
    <PanelTitle>{title}</PanelTitle>
    <PanelNote>Samples</PanelNote>
  </PanelHead>
);

export default function App() {
  return (
    <Canvas>
      <GlobalStyle />
      <Panel $left={438} $top={35} $height={1340}>
        <Head title="Navigation Bars" />
        <Columns>
          <SmallColumn />
          <LargeColumn />
          <ModalColumn />
        </Columns>
      </Panel>
      <Panel $left={40} $top={345} $height={568} $raised>
        <Head title="Headers" />
        <Columns>
          <BigHeaders />
          <MidHeaders />
          <SmallHeaders />
        </Columns>
      </Panel>
      <Panel $left={1294} $top={35} $height={669}>
        <Head title="Tab Bars" />
        <Columns>
          <TabsLeft />
          <TabsRight />
        </Columns>
      </Panel>
      <Panel $left={1294} $top={739} $height={700}>
        <Head title="Cells" />
        <Columns>
          <CellsLeft />
          <CellsRight />
        </Columns>
      </Panel>
    </Canvas>
  );
}
